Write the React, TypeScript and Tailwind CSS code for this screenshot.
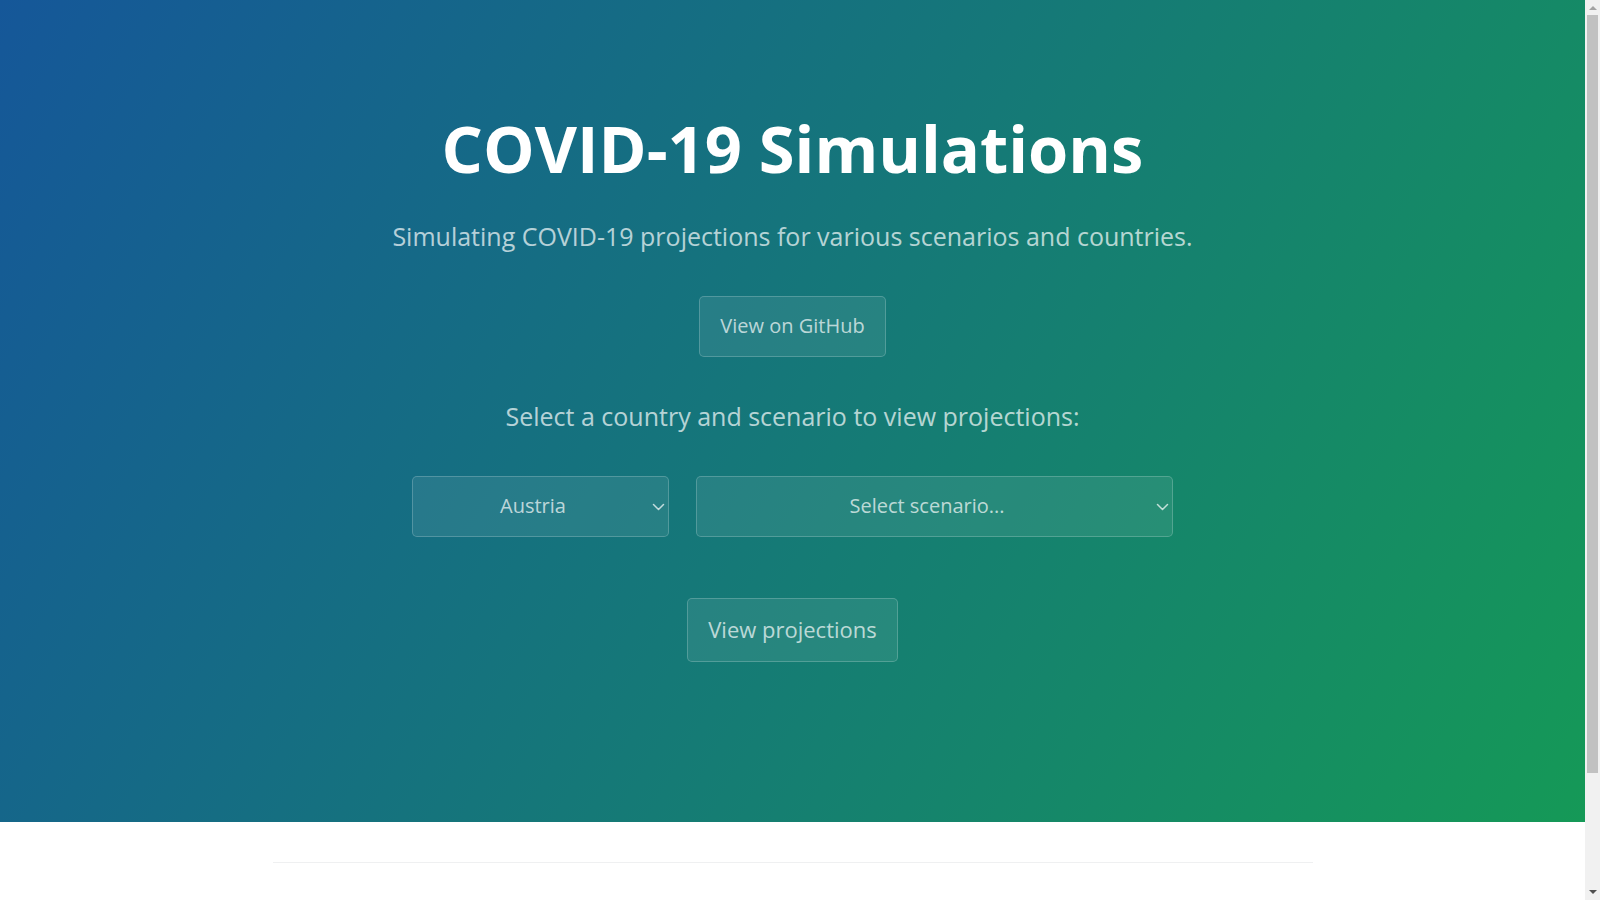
import React from "react";

function Chevron() {
  return (
    <svg
      className="pointer-events-none absolute right-[4px] top-1/2 -translate-y-1/2"
      width="13"
      height="8"
      viewBox="0 0 13 8"
      fill="none"
    >
      <path d="M1.5 1.5 L6.5 6.5 L11.5 1.5" stroke="rgba(255,255,255,0.72)" strokeWidth="1.5" strokeLinecap="round" strokeLinejoin="round" />
    </svg>
  );
}

function Select({ width, value, options }: { width: string; value: string; options: string[] }) {
  return (
    <div className={`relative ${width}`}>
      <select
        defaultValue={value}
        className="h-[61px] w-full appearance-none rounded-[5px] border border-white/20 bg-white/[0.08] pb-[2px] pl-[12px] pr-[27px] text-center text-[20px] text-white/70 outline-none [text-align-last:center]"
      >
        {options.map((o) => (
          <option key={o} value={o} className="text-black">
            {o}
          </option>
        ))}
      </select>
      <Chevron />
    </div>
  );
}

function Scrollbar() {
  return (
    <div className="flex h-[900px] w-[15px] shrink-0 flex-col items-center bg-[#f1f1f1]">
      <div className="flex h-[15px] w-full items-center justify-center">
        <svg width="8" height="5" viewBox="0 0 8 5">
          <path d="M0 5 L4 1 L8 5 Z" fill="#a3a3a3" />
        </svg>
      </div>
      <div className="h-[758px] w-[11px] bg-[#c1c1c1]" />
      <div className="flex-1" />
      <div className="flex h-[15px] w-full items-center justify-center">
        <svg width="8" height="5" viewBox="0 0 8 5">
          <path d="M0 0 L8 0 L4 4 Z" fill="#505050" />
        </svg>
      </div>
    </div>
  );
}

export default function App() {
  return (
    <div className="flex h-[900px] overflow-hidden bg-white font-['Open_Sans',sans-serif]">
      <div className="min-w-0 flex-1">
        <header className="flex h-[822px] flex-col items-center bg-[linear-gradient(120deg,#155799,#159957)] pt-[116px] text-center">
          <h1 className="text-[65px] font-bold leading-[65px] text-white">COVID-19 Simulations</h1>
          <p className="mt-[37px] text-[25px] leading-[36px] text-white/70">
            Simulating COVID-19 projections for various scenarios and countries.
          </p>
          <a
            href="#"
            className="mt-[42px] flex h-[61px] items-center rounded-[5px] border border-white/20 bg-white/[0.08] px-[20px] pb-[2px] text-[20px] leading-[30px] text-white/70"
          >
            View on GitHub
          </a>
          <p className="mt-[41px] text-[25px] leading-[36px] text-white/70">
            Select a country and scenario to view projections:
          </p>
          <div className="mt-[42px] flex gap-[27px]">
            <Select width="w-[257px]" value="Austria" options={["Austria", "Germany", "Italy", "Spain"]} />
            <Select width="w-[477px]" value="Select scenario..." options={["Select scenario..."]} />
          </div>
          <button className="mt-[61px] flex h-[64px] items-center rounded-[5px] border border-white/20 bg-white/[0.08] px-[20px] pb-[2px] text-[22px] leading-[30px] text-white/70">
            View projections
          </button>
        </header>
        <main className="mx-auto w-[1040px] pt-[40px]">
          <hr className="border-0 border-t border-[#eff0f1]" />
        </main>
      </div>
      <Scrollbar />
    </div>
  );
}
